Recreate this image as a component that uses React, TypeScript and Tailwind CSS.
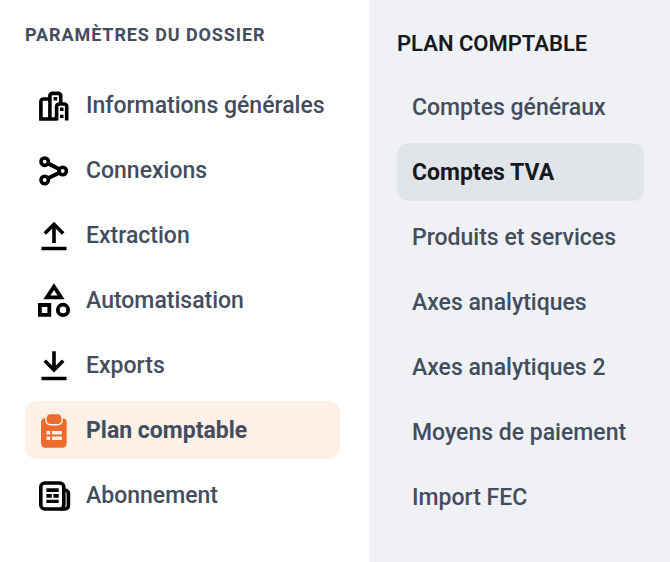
import { type ReactNode } from 'react'
import clsx from 'clsx'

type MenuItem = { label: string; icon: ReactNode }

function Icon({ children }: { children: ReactNode }) {
  return (
    <svg viewBox="0 0 32 32" className="size-8 shrink-0 overflow-visible" fill="none" stroke="currentColor" strokeWidth="3.6" aria-hidden="true">
      {children}
    </svg>
  )
}

const buildingsIcon = (
  <Icon>
    <path d="M11.9 29V5.8a2.4 2.4 0 0 1 2.4-2.4h6a2.4 2.4 0 0 1 2.4 2.4v7.6M11.9 9H5.3a2.4 2.4 0 0 0-2.4 2.4V29h15.7M18.6 30.6V16.4a2.4 2.4 0 0 1 2.4-2.4h5.3a2.4 2.4 0 0 1 2.4 2.4v14.2" />
    <path stroke="none" fill="currentColor" d="M15.6 7h3.6v3.6h-3.6zM22 17.6h3.5v3.3H22zM22 24.8h3.5v3.3H22z" />
  </Icon>
)

const nodesIcon = (
  <Icon>
    <circle cx="6.7" cy="6.7" r="3.7" />
    <circle cx="6.7" cy="25" r="3.7" />
    <circle cx="24.7" cy="16" r="3.7" />
    <path d="m10 8.4 11.4 5.9M10 23.3l11.4-5.6" strokeWidth="4" />
  </Icon>
)

const uploadIcon = (
  <Icon>
    <path d="M16 23V4M6.8 13.4 16 4.2l9.2 9.2M3.5 28.5h25" />
  </Icon>
)

const shapesIcon = (
  <Icon>
    <path d="M16 1.6 8.9 12.4h14.2zM1.9 20h9.4v9.8H1.9z" strokeWidth="3.8" />
    <circle cx="25" cy="24.9" r="5.2" strokeWidth="3.8" />
  </Icon>
)

const downloadIcon = (
  <Icon>
    <path d="M16 1.3V20M6.8 10.8 16 20l9.2-9.2M3.5 28.5h25" />
  </Icon>
)

const clipboardIcon = (
  <Icon>
    <g stroke="none" fill="currentColor">
      <path
        fillRule="evenodd"
        d="M7.2 3A4.2 4.2 0 0 0 3 7.2v21.3a4.2 4.2 0 0 0 4.2 4.2h17.3a4.2 4.2 0 0 0 4.2-4.2V7.2A4.2 4.2 0 0 0 24.8 3.3v2.2a5 5 0 0 1-5 5h-7.6a5 5 0 0 1-5-5zM8.4 16h3.8v3.6H8.4zM14 16h9.8v3.6H14zM8.4 21.4h3.8V25H8.4zM14 21.4h9.8V25H14z"
      />
      <rect x="8.7" y="-0.7" width="14.7" height="9.7" rx="4" />
    </g>
  </Icon>
)

const newspaperIcon = (
  <Icon>
    <rect x="2.8" y="3" width="23" height="26" rx="4" />
    <path d="M26 10.3h1.2a3.2 3.2 0 0 1 3.2 3.2v12.3a3.2 3.2 0 0 1-3.2 3.2H22" />
    <path stroke="none" fill="currentColor" d="M8.4 8.2h12.3v3.7H8.4zM8.4 14.1h5.4v3.6H8.4zM15.4 14.1h5.3v3.6h-5.3zM8.4 19.7h12.3v3.4H8.4z" />
  </Icon>
)

const settings: MenuItem[] = [
  { label: 'Informations générales', icon: buildingsIcon },
  { label: 'Connexions', icon: nodesIcon },
  { label: 'Extraction', icon: uploadIcon },
  { label: 'Automatisation', icon: shapesIcon },
  { label: 'Exports', icon: downloadIcon },
  { label: 'Plan comptable', icon: clipboardIcon },
  { label: 'Abonnement', icon: newspaperIcon },
]

const chartPages = [
  'Comptes généraux',
  'Comptes TVA',
  'Produits et services',
  'Axes analytiques',
  'Axes analytiques 2',
  'Moyens de paiement',
  'Import FEC',
]

export default function App() {
  const activeSetting = 'Plan comptable'
  const activePage = 'Comptes TVA'

  return (
    <div className="grid min-h-screen grid-cols-[369fr_301fr] bg-white font-['Roboto',sans-serif] text-[23px] leading-[30px] font-medium text-[#434d5e]">
      <nav aria-labelledby="settings-title" className="pt-6 pr-[29px] pb-8 pl-[25px]">
        <h2 id="settings-title" className="text-[18px] leading-[22px] font-bold tracking-wider uppercase">
          Paramètres du dossier
        </h2>
        <ul className="mt-[30px] space-y-[7px]">
          {settings.map(({ label, icon }) => {
            const active = label === activeSetting
            return (
              <li key={label}>
                <a
                  href="#"
                  aria-current={active ? 'page' : undefined}
                  className={clsx(
                    'flex items-center gap-4 rounded-xl pt-[15px] pb-[13px] pl-[13px] whitespace-nowrap',
                    active && 'bg-[#fdf0e7] font-bold',
                  )}
                >
                  <span className={clsx('-my-px', active ? 'text-[#ef6a2d]' : 'text-black')}>{icon}</span>
                  {label}
                </a>
              </li>
            )
          })}
        </ul>
      </nav>

      <nav aria-labelledby="chart-title" className="bg-[#eff1f5] pt-[29px] pr-[26px] pb-8 pl-7">
        <h2 id="chart-title" className="text-[22px] font-semibold text-[#16191d] uppercase">
          Plan comptable
        </h2>
        <ul className="mt-[19px] space-y-[7px]">
          {chartPages.map(label => {
            const active = label === activePage
            return (
              <li key={label}>
                <a
                  href="#"
                  aria-current={active ? 'page' : undefined}
                  className={clsx(
                    'block rounded-xl pt-[15px] pb-[13px] pl-[15px] whitespace-nowrap',
                    active && 'bg-[#e1e4e8] font-bold text-[#16191d]',
                  )}
                >
                  {label}
                </a>
              </li>
            )
          })}
        </ul>
      </nav>
    </div>
  )
}
